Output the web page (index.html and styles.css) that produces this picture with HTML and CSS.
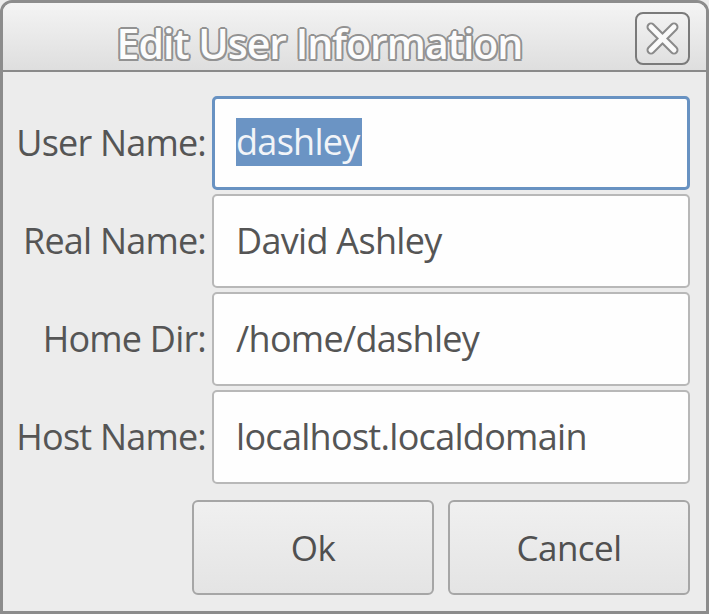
FILE: index.html
```html
<!DOCTYPE html>
<html>
<head>
<meta charset="utf-8">
<link rel="stylesheet" href="styles.css">
</head>
<body>
<div class="window">
  <div class="titlebar">
    <div class="title">Edit User Information</div>
    <div class="close">
      <svg width="51" height="49" viewBox="0 0 51 49">
        <path d="M14 13 L37 36 M37 13 L14 36" stroke="#8a8a8a" stroke-width="9" stroke-linecap="round" fill="none"/>
        <path d="M14 13 L37 36 M37 13 L14 36" stroke="#fafafa" stroke-width="5" stroke-linecap="round" fill="none"/>
      </svg>
    </div>
  </div>
  <div class="content">
    <div class="form">
      <div class="label">User Name:</div>
      <div class="field focused"><span class="sel">dashley</span></div>
      <div class="label">Real Name:</div>
      <div class="field">David Ashley</div>
      <div class="label">Home Dir:</div>
      <div class="field">/home/dashley</div>
      <div class="label">Host Name:</div>
      <div class="field">localhost.localdomain</div>
    </div>
    <div class="buttons">
      <div class="btn">Ok</div>
      <div class="btn">Cancel</div>
    </div>
  </div>
</div>
</body>
</html>
```
FILE: styles.css
```css
html, body {
  margin: 0;
  padding: 0;
  background: #ececec;
}
body {
  width: 709px;
  height: 614px;
  overflow: hidden;
  font-family: "Open Sans", "Noto Sans", sans-serif;
}
.window {
  box-sizing: border-box;
  width: 709px;
  height: 614px;
  border: 3px solid #8c8c8c;
  border-radius: 12px 12px 0 0;
  background: #ececec;
  display: flex;
  flex-direction: column;
  overflow: hidden;
}
.titlebar {
  height: 67px;
  flex: none;
  border-bottom: 2px solid #8a8a8a;
  background: linear-gradient(#f4f4f4, #dedede);
  display: flex;
  align-items: center;
  position: relative;
}
.title {
  flex: 1;
  text-align: center;
  padding-right: 70px;
  padding-top: 13px;
  font-size: 41px;
  font-weight: 600;
  font-stretch: 92%;
  letter-spacing: -1px;
  color: #fcfcfc;
  text-shadow:
    -2px 0 0 #929292, 2px 0 0 #929292, 0 -2px 0 #929292, 0 2px 0 #929292,
    -1.5px -1.5px 0 #929292, 1.5px 1.5px 0 #929292, -1.5px 1.5px 0 #929292, 1.5px -1.5px 0 #929292;
}
.close {
  position: absolute;
  right: 16px;
  top: 9px;
  box-sizing: border-box;
  width: 55px;
  height: 53px;
  border: 2px solid #7a7a7a;
  border-radius: 8px;
  background: linear-gradient(#f2f2f2, #e0e0e0);
  display: flex;
  align-items: center;
  justify-content: center;
}
.content {
  flex: 1;
  padding: 24px 16px 0 0;
  display: flex;
  flex-direction: column;
}
.form {
  display: grid;
  grid-template-columns: 209px 478px;
  grid-auto-rows: 94px;
  row-gap: 4px;
}
.label {
  display: flex;
  align-items: center;
  justify-content: flex-end;
  padding-right: 6px;
  font-size: 36px;
  font-weight: 500;
  font-stretch: 92%;
  letter-spacing: -0.8px;
  color: #555555;
  padding-bottom: 2px;
}
.field {
  box-sizing: border-box;
  background: #fefefe;
  border: 2px solid #b8b8b8;
  border-radius: 5px;
  display: flex;
  align-items: center;
  padding-left: 22px;
  font-size: 36px;
  font-weight: 500;
  font-stretch: 92%;
  letter-spacing: -0.7px;
  color: #555555;
  padding-bottom: 2px;
}
.field.focused {
  border: 3px solid #6892c2;
  padding-left: 21px;
}
.sel {
  background: #6b94c4;
  color: #f2f4f8;
  line-height: 48px;
  padding-right: 2px;
}
.buttons {
  margin-top: 16px;
  display: flex;
  justify-content: flex-end;
  gap: 14px;
}
.btn {
  box-sizing: border-box;
  width: 242px;
  height: 95px;
  border: 2px solid #a6a6a6;
  border-radius: 6px;
  background: linear-gradient(#f0f0f0, #e4e4e4);
  display: flex;
  align-items: center;
  justify-content: center;
  font-size: 35px;
  font-weight: 500;
  font-stretch: 92%;
  letter-spacing: -0.5px;
  color: #505050;
}
```
